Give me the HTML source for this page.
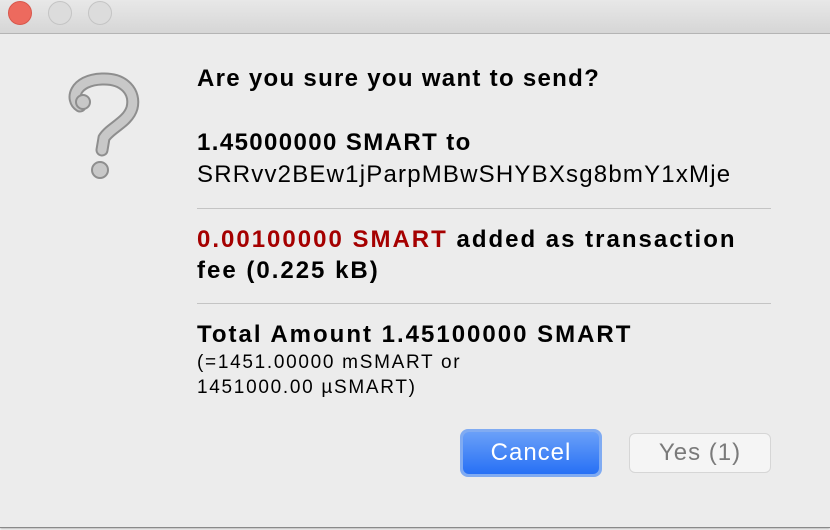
<!DOCTYPE html>
<html><head><style>
body{margin:0;width:830px;height:530px;background:#fff;font-family:"Liberation Sans",sans-serif;overflow:hidden;position:relative}
.win{position:absolute;left:0;top:0;width:830px;height:527px;background:#ececec;border-bottom:1px solid #8a8a8a;box-shadow:0 1px 2px rgba(0,0,0,.3)}
.tb{position:absolute;left:0;top:0;width:830px;height:33px;background:linear-gradient(#e8e8e8,#d6d6d6);border-bottom:1px solid #b4b4b4}
.dot{position:absolute;top:1px;width:22px;height:22px;border-radius:50%;background:#dcdcdc;border:1px solid #c4c4c4}
.t{position:absolute;left:197px;color:#000;white-space:nowrap}
.b{font-weight:bold;font-size:24px}
.sep{position:absolute;left:197px;width:574px;height:1px;background:#c4c4c4}
.btn{position:absolute;font-size:22px;text-align:center;border-radius:6px}
</style></head><body>
<div class="win">
<div class="tb">
<div class="dot" style="left:8px;background:#ed6a5e;border-color:#d8574c"></div>
<div class="dot" style="left:48px"></div>
<div class="dot" style="left:88px"></div>
</div>
<svg style="position:absolute;left:66px;top:72px" width="76" height="110" viewBox="0 0 76 110">
<path d="M14 34 C4 28 8 8 36 7 C58 6 70 20 66 36 C62 50 44 56 38 66 L36 78" fill="none" stroke="#8e8e8e" stroke-width="13" stroke-linecap="round"/>
<path d="M14 34 C4 28 8 8 36 7 C58 6 70 20 66 36 C62 50 44 56 38 66 L36 78" fill="none" stroke="#c8c8c8" stroke-width="9" stroke-linecap="round"/>
<circle cx="17" cy="30" r="7" fill="#c8c8c8" stroke="#8e8e8e" stroke-width="2"/>
<circle cx="34" cy="98" r="8" fill="#c8c8c8" stroke="#8e8e8e" stroke-width="2"/>
</svg>
<div class="t b" style="top:65px;letter-spacing:1.3px">Are you sure you want to send?</div>
<div class="t b" style="top:129px;letter-spacing:1.4px">1.45000000 SMART to</div>
<div class="t" style="top:161px;font-size:24px;letter-spacing:1.2px">SRRvv2BEw1jParpMBwSHYBXsg8bmY1xMje</div>
<div class="sep" style="top:208px"></div>
<div class="t b" style="top:226px;letter-spacing:2px"><span style="color:#a50000">0.00100000 SMART</span> added as transaction</div>
<div class="t b" style="top:257px;letter-spacing:2px">fee (0.225 kB)</div>
<div class="sep" style="top:303px"></div>
<div class="t b" style="top:321px;letter-spacing:2px">Total Amount 1.45100000 SMART</div>
<div class="t" style="top:352px;font-size:19px;letter-spacing:1.7px">(=1451.00000 mSMART or</div>
<div class="t" style="top:377px;font-size:19px;letter-spacing:1.7px">1451000.00 µSMART)</div>
<div class="btn" style="left:460px;top:429px;width:142px;height:48px;background:#80abf2;border-radius:8px"></div>
<div class="btn" style="left:463px;top:432px;width:136px;height:42px;line-height:42px;background:linear-gradient(#6aa0f8,#2770f5);color:#fff;font-size:24px;letter-spacing:1px">Cancel</div>
<div class="btn" style="left:629px;top:433px;width:140px;height:38px;line-height:38px;background:#f5f5f5;border:1px solid #d6d6d6;color:#7a7a7a;font-size:24px;letter-spacing:1px">Yes (1)</div>
</div>
</body></html>
